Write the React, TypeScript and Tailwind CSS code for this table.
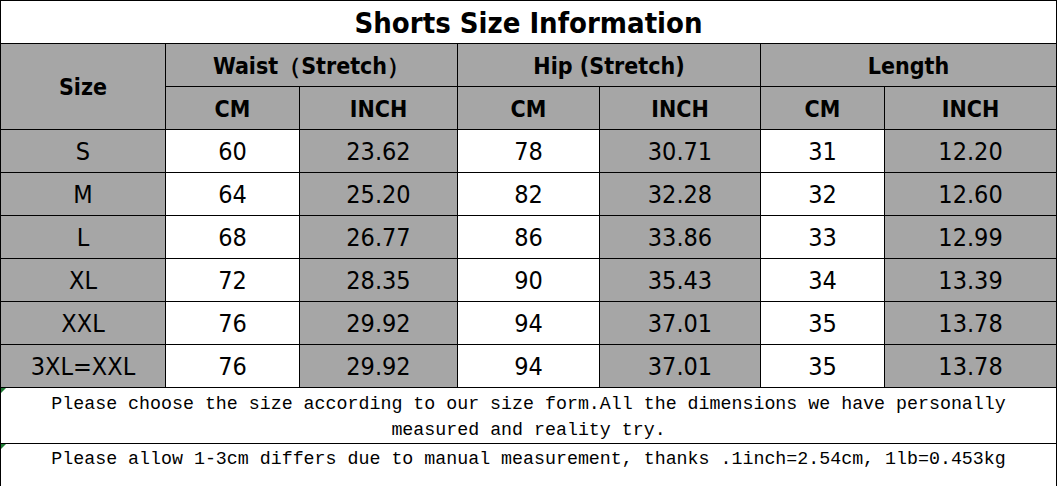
const rows = [
  ['S', '60', '23.62', '78', '30.71', '31', '12.20'],
  ['M', '64', '25.20', '82', '32.28', '32', '12.60'],
  ['L', '68', '26.77', '86', '33.86', '33', '12.99'],
  ['XL', '72', '28.35', '90', '35.43', '34', '13.39'],
  ['XXL', '76', '29.92', '94', '37.01', '35', '13.78'],
  ['3XL=XXL', '76', '29.92', '94', '37.01', '35', '13.78'],
]

const widths = [165, 134, 158, 142, 161, 124, 172]

const font = { fontFamily: '"DejaVu Sans Condensed", "DejaVu Sans", sans-serif' }

const App = () => {
  return (
    <div className="w-[1057px] h-[486px] bg-white text-black" style={font}>
      <table className="border-collapse table-fixed w-[1057px]">
        <colgroup>
          {widths.map((w, i) => (
            <col key={i} style={{ width: w }} />
          ))}
        </colgroup>
        <tbody>
          <tr className="h-[43px]">
            <td colSpan={7} className="border border-black text-center font-bold text-[29px] leading-none pt-[3px]">
              Shorts Size Information
            </td>
          </tr>
          <tr className="h-[43px] bg-[#a6a6a6] font-bold text-[23px]">
            <td rowSpan={2} className="border border-black text-center pt-[2px]">Size</td>
            <td colSpan={2} className="border border-black text-center pt-[2px]">Waist（Stretch）</td>
            <td colSpan={2} className="border border-black text-center pt-[2px]">Hip (Stretch)</td>
            <td colSpan={2} className="border border-black text-center pt-[2px]">Length</td>
          </tr>
          <tr className="h-[43px] bg-[#a6a6a6] font-bold text-[23px]">
            <td className="border border-black text-center pt-[2px]">CM</td>
            <td className="border border-black text-center pt-[2px]">INCH</td>
            <td className="border border-black text-center pt-[2px]">CM</td>
            <td className="border border-black text-center pt-[2px]">INCH</td>
            <td className="border border-black text-center pt-[2px]">CM</td>
            <td className="border border-black text-center pt-[2px]">INCH</td>
          </tr>
          {rows.map((r) => (
            <tr key={r[0]} className="h-[43px] text-[25px]">
              {r.map((c, i) => (
                <td
                  key={i}
                  className={`border border-black text-center leading-none pt-[1px] ${
                    i === 1 || i === 3 || i === 5 ? 'bg-white' : 'bg-[#a6a6a6]'
                  }`}
                >
                  {c}
                </td>
              ))}
            </tr>
          ))}
          <tr className="h-[55px]">
            <td colSpan={7} className="relative border border-black align-top text-center pt-[3px]">
              <span className="absolute left-0 top-0 border-t-[5px] border-r-[5px] border-t-[#1e7b34] border-r-transparent" />
              <p
                className="text-[18.3px] leading-[26px] text-black"
                style={{ fontFamily: '"Liberation Mono", monospace' }}
              >
                Please choose the size according to our size form.All the dimensions we have personally
                <br />
                measured and reality try.
              </p>
            </td>
          </tr>
          <tr className="h-[43px]">
            <td colSpan={7} className="relative border border-black align-top text-center pt-[2px]">
              <span className="absolute left-0 top-0 border-t-[5px] border-r-[5px] border-t-[#1e7b34] border-r-transparent" />
              <p
                className="text-[18.3px] leading-[26px] text-black"
                style={{ fontFamily: '"Liberation Mono", monospace' }}
              >
                Please allow 1-3cm differs due to manual measurement, thanks .1inch=2.54cm, 1lb=0.453kg
              </p>
            </td>
          </tr>
        </tbody>
      </table>
    </div>
  )
}

export default App
